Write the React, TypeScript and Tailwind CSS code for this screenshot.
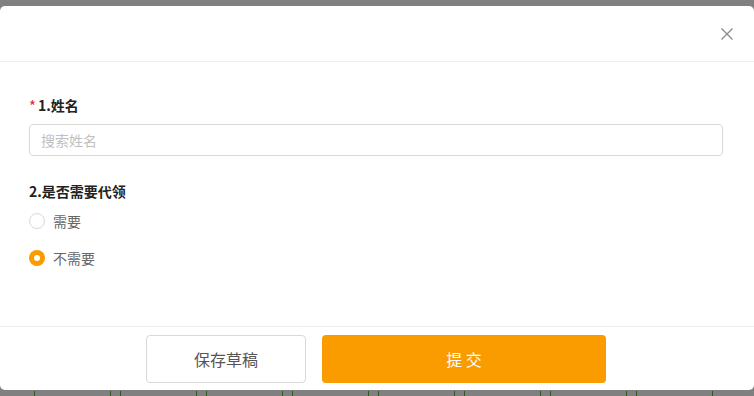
import React from "react";

const ticks = [34, 110, 120, 196, 206, 282, 292, 368, 378, 454, 464, 540, 550, 626, 636, 712];

export default function App() {
  return (
    <div
      className="relative w-[754px] h-[396px] bg-[#808080] overflow-hidden"
      style={{ fontFamily: '"Noto Sans CJK SC", "Noto Sans", sans-serif' }}
    >
      <div className="h-[6px]" />
      <div className="h-[384px] bg-white rounded-[5px] flex flex-col">
        {/* header */}
        <div className="h-[56px] border-b border-[#efefef] flex items-center justify-end pr-[21px]">
          <svg width="12" height="12" viewBox="0 0 12 12">
            <path d="M0.5 0.5 L11.5 11.5 M11.5 0.5 L0.5 11.5" stroke="#8a8a8a" strokeWidth="1.3" fill="none" />
          </svg>
        </div>
        {/* body */}
        <div className="flex-1 pl-[29px] pr-[31px] pt-[33px]">
          <div className="h-[20px] flex items-center text-[14px] font-bold text-[#222]">
            <span className="text-[#f5222d] font-normal text-[15px] mr-[2px] mt-[3px]">*</span>
            <span>1.姓名</span>
          </div>
          <div className="mt-[9px] h-[32px] border border-[#d9d9d9] rounded-[4px] flex items-center px-[11px] text-[14px] text-[#bfbfbf]">
            搜索姓名
          </div>
          <div className="mt-[25px] h-[20px] flex items-center text-[14px] font-bold text-[#222]">
            2.是否需要代领
          </div>
          <div className="mt-[10px] h-[20px] flex items-center gap-[8px] text-[14px] text-[#666]">
            <span className="w-[16px] h-[16px] rounded-full border border-[#d9d9d9] bg-white" />
            <span>需要</span>
          </div>
          <div className="mt-[17px] h-[20px] flex items-center gap-[8px] text-[14px] text-[#666]">
            <span className="w-[16px] h-[16px] rounded-full bg-[#fa9b00] flex items-center justify-center">
              <span className="w-[6px] h-[6px] rounded-full bg-white" />
            </span>
            <span>不需要</span>
          </div>
        </div>
        {/* footer */}
        <div className="h-[64px] border-t border-[#ececec] flex justify-center gap-[16px] pt-[8px] pr-[2px]">
          <button className="w-[160px] h-[48px] border border-[#d9d9d9] rounded-[4px] bg-white text-[16px] text-[#555]">
            保存草稿
          </button>
          <button className="w-[284px] h-[48px] rounded-[4px] bg-[#fa9b00] text-[16px] text-white">
            提&nbsp;交
          </button>
        </div>
      </div>
      {ticks.map((x) => (
        <div key={x} className="absolute bottom-0 w-px h-[5px] bg-[#2c5a1c]" style={{ left: x }} />
      ))}
    </div>
  );
}
